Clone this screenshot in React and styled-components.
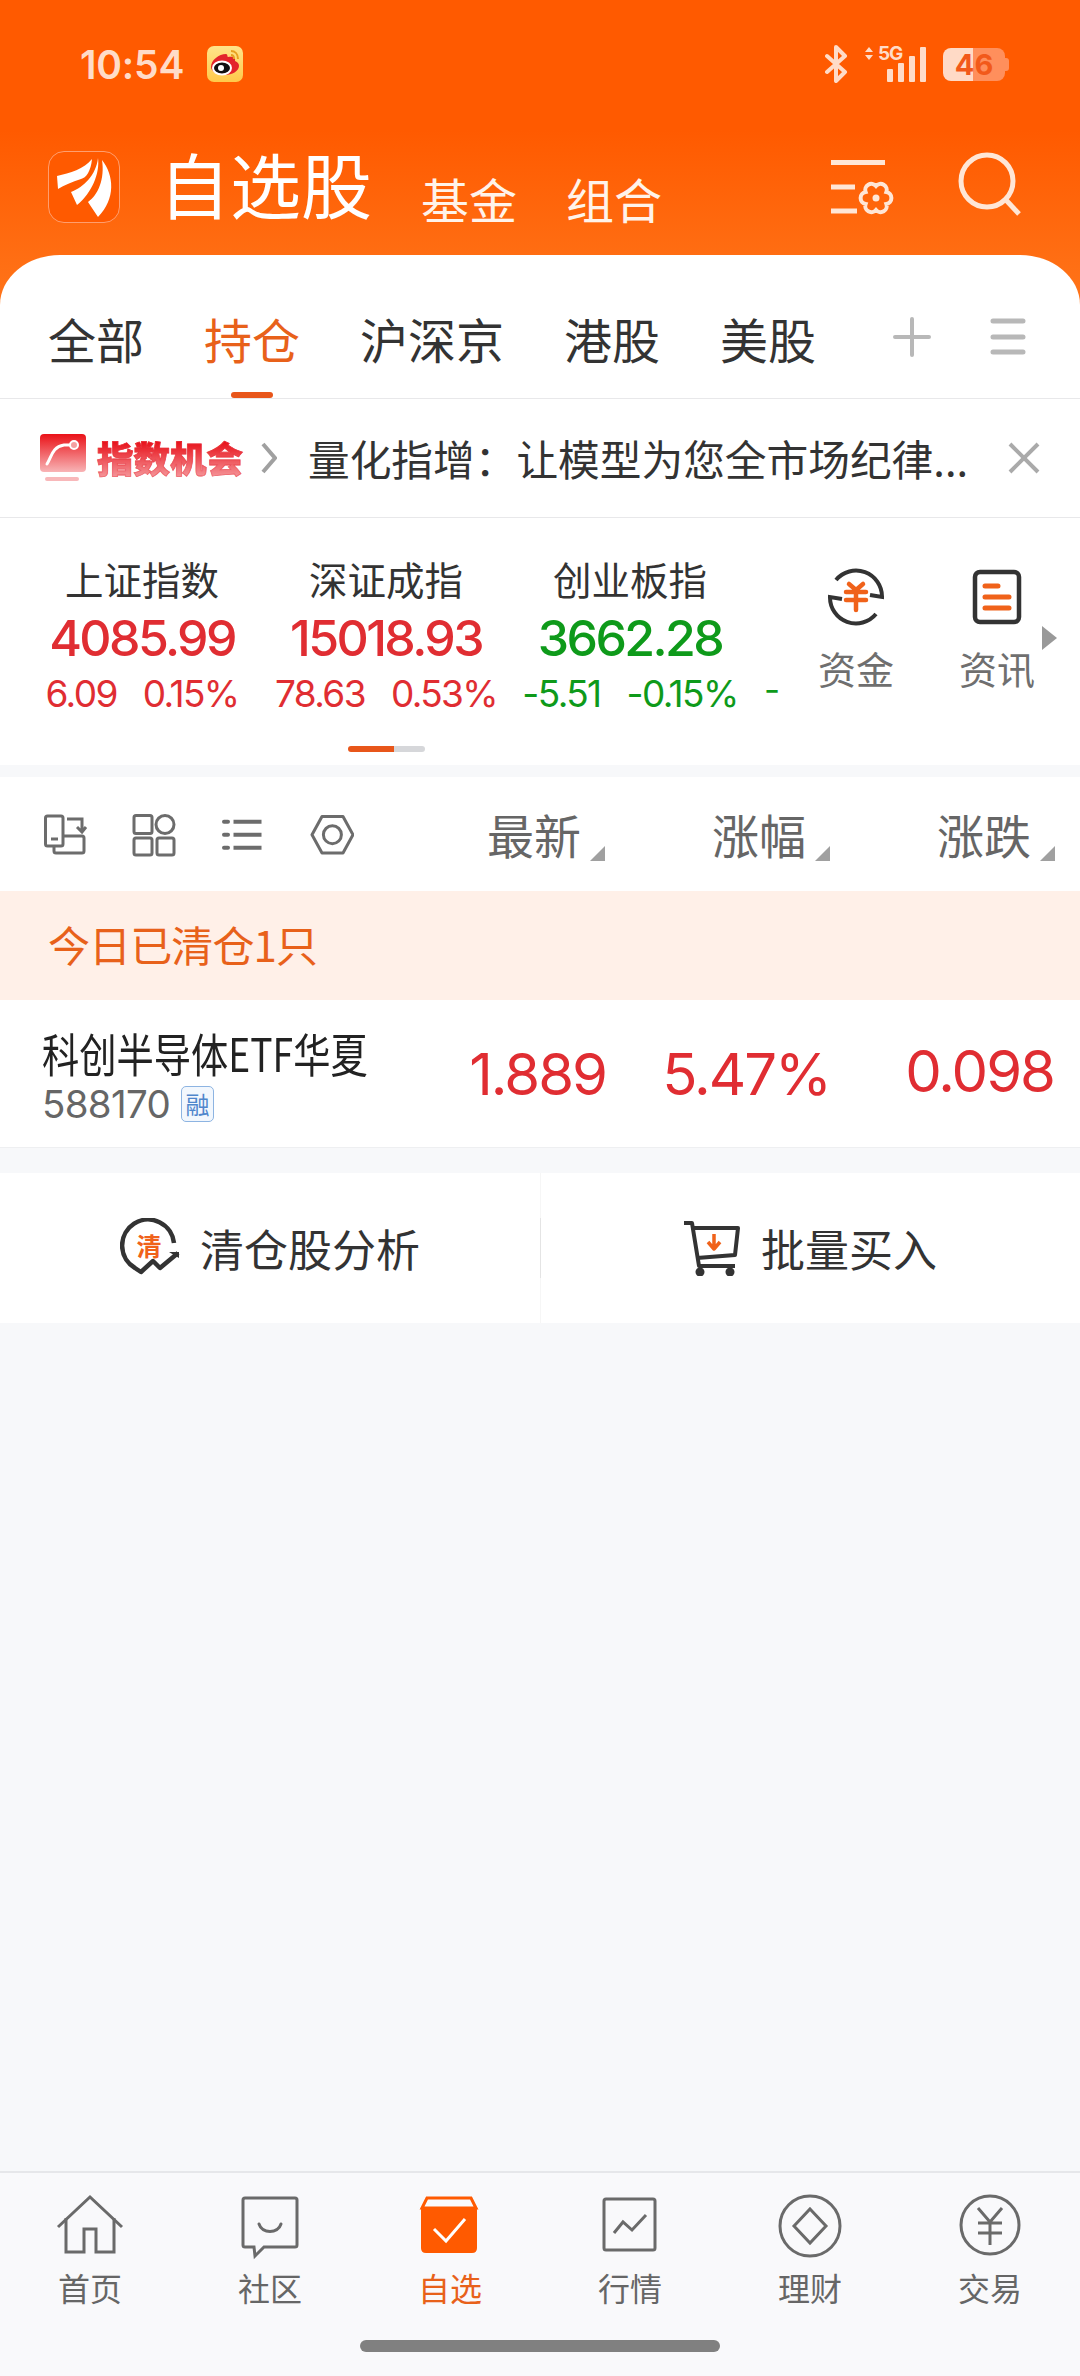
import React from "react";
import styled, { createGlobalStyle } from "styled-components";

const Global = createGlobalStyle`
  html, body { margin: 0; padding: 0; background: #f7f8fa; }
  * { box-sizing: border-box; }
`;
const CJK = `"Noto Sans CJK SC", "Noto Sans", sans-serif`;
const NUM = `Inter, "Noto Sans CJK SC", sans-serif`;
const UP = "#e02d32";
const DOWN = "#0e9a1a";
const ORANGE = "#e8611a";

const Page = styled.div`
  width: 1080px; height: 2376px; display: flex; flex-direction: column;
  background: #f7f8fa; overflow: hidden; font-family: ${CJK}; color: #333;
`;
const Top = styled.header`
  background: linear-gradient(#ff5a00 0, #ff5a00 130px, #ff7419 300px);
`;
const StatusBar = styled.div`
  height: 126px; display: flex; align-items: center; padding: 2px 71px 0 80px;
  color: #ffdcc8;
`;
const Time = styled.span`
  font: 600 39px/1 ${NUM}; letter-spacing: -0.2px; width: 127px;
`;
const StatusRight = styled.div`
  margin-left: auto; margin-right: 4px; display: flex; align-items: center; height: 40px;
`;
const Cell = styled.div`
  position: relative; width: 62px; height: 36px; margin: 0 16px 0 17px;
`;
const FiveG = styled.span`
  position: absolute; left: 13px; top: -2px; font: 700 19px/1 ${NUM}; letter-spacing: -1.2px; color: #ffdcc8;
`;
const Battery = styled.div`
  position: relative; width: 62px; height: 33px; border-radius: 8px; display: flex;
  align-items: center; justify-content: center; font: 700 29px/1 ${NUM}; color: #f2591a;
  background: linear-gradient(90deg, #ffdac6 0, #ffdac6 30px, #ff8f5c 30px);
  &::after {
    content: ""; position: absolute; right: -4px; top: 10px; width: 4px; height: 13px;
    background: #ff8f5c; border-radius: 0 3px 3px 0;
  }
`;
const TitleBar = styled.div`
  height: 129px; display: flex; padding: 25px 57px 0 48px; color: #fff3ea;
`;
const Logo = styled.div`
  width: 72px; height: 72px; border-radius: 16px; border: 1.5px solid #ff9e6e;
  background: #ff5a00; margin-right: 39px;
  svg { display: block; margin: -1.5px; }
`;
const Title = styled.h1`
  margin: -14px 49px 0 0; font: 400 71px/90px ${CJK}; color: #fff;
`;
const SubTitle = styled.span`
  font: 400 48px/60px ${CJK}; margin: 17px 49px 0 0;
`;
const TitleIcons = styled.div`
  margin-left: auto; display: flex; align-items: flex-start; gap: 60px; margin-top: 1px;
`;
const SettingsIcon = styled.svg`
  margin-top: 8px;
`;
const Sheet = styled.div`
  background: #fff; border-radius: 60px 60px 0 0 / 50px 50px 0 0;
`;
const Tabs = styled.nav`
  height: 144px; display: flex; align-items: flex-start; padding: 0 54px 0 48px;
  border-bottom: 1px solid #e8e8ea;
`;
const Tab = styled.div`
  position: relative; font: 400 48px/60px ${CJK}; margin: 53px 60px 0 0; white-space: nowrap;
  color: ${(p) => (p.$active ? ORANGE : "#333")};
  ${(p) => p.$active && `&::after{content:"";position:absolute;left:27px;bottom:-30px;width:42px;height:6px;border-radius:3px;background:#e8561a;}`}
`;
const TabTools = styled.div`
  margin-left: auto; display: flex; gap: 59px; margin-top: 62px;
`;
const Notice = styled.div`
  height: 119px; background: #fff; border-bottom: 1px solid #e8e8ea; display: flex;
  align-items: center; padding: 0 40px;
`;
const NoticeBrand = styled.span`
  font: 900 36.5px/44px ${CJK}; margin: 0 18px 0 11px; letter-spacing: 0;
  background: linear-gradient(#e8141c 15%, #f6a0a4 100%); -webkit-background-clip: text;
  background-clip: text; color: transparent; white-space: nowrap;
  -webkit-text-stroke: 0.8px rgba(232, 50, 60, 0.5);
`;
const NoticeText = styled.span`
  font: 400 41.7px/56px ${CJK}; margin-left: 31px; white-space: nowrap; color: #333; width: 665px;
`;
const Indices = styled.section`
  position: relative; height: 247px; background: #fff; display: flex; padding-left: 20px;
  flex-shrink: 0;
`;
const IndexCard = styled.div`
  width: 244px; display: flex; flex-direction: column; align-items: center; padding-top: 35px;
`;
const IndexName = styled.div`
  font: 400 38.5px/50px ${CJK}; color: #333;
`;
const IndexPrice = styled.div`
  font: 500 50px/56px ${NUM}; letter-spacing: -2.6px; color: ${(p) => p.$c}; margin-top: 7px;
`;
const IndexSub = styled.div`
  font: 400 37px/44px ${NUM}; letter-spacing: -1.6px; color: ${(p) => p.$c}; display: flex; gap: 26px; margin-top: 6px;
`;
const Dash = styled.span`
  font: 400 35px/44px ${NUM}; color: ${DOWN}; position: absolute; left: 764px; top: 149px;
`;
const Shortcuts = styled.div`
  position: absolute; left: 0; top: 0; width: 100%; height: 100%; pointer-events: none;
`;
const Shortcut = styled.div`
  position: absolute; left: ${(p) => p.$x}px; top: 50px; width: 100px; display: flex; flex-direction: column;
  align-items: center; font: 400 38px/50px ${CJK}; color: #6f6f6f;
  svg { display: block; margin-bottom: 17px; }
`;
const MoreArrow = styled.div`
  position: absolute; left: 1042px; top: 108px; width: 0; height: 0;
  border-left: 15px solid #999; border-top: 12px solid transparent; border-bottom: 12px solid transparent;
`;
const Pager = styled.div`
  position: absolute; left: 348px; top: 228px; width: 77px; height: 6px; border-radius: 3px;
  background: linear-gradient(90deg, #e8561a 0, #e8561a 46px, #d6d7da 46px);
`;
const Toolbar = styled.div`
  margin-top: 12px; height: 114px; background: #fff; display: flex; align-items: center;
  padding: 0 25px 0 44px; flex-shrink: 0;
`;
const ToolIcons = styled.div`
  display: flex; gap: 42px; margin-right: auto; margin-top: 4px;
`;
const SortCol = styled.div`
  width: 225px; display: flex; justify-content: flex-end; align-items: flex-end; font: 400 47px/60px ${CJK}; color: #666;
  svg { margin: 0 0 0 9px; position: relative; top: -3px; }
`;
const SoldBanner = styled.div`
  height: 109px; background: #fff0e8; display: flex; align-items: center; padding: 0 0 3px 48px;
  font: 400 42px/56px ${CJK}; color: ${ORANGE}; flex-shrink: 0; letter-spacing: -0.9px;
`;
const StockRow = styled.div`
  height: 148px; background: #fff; border-bottom: 1px solid #eeeff1; display: flex; align-items: center;
  padding: 0 28px 0 42px; flex-shrink: 0;
`;
const StockInfo = styled.div`
  margin-right: auto; width: 340px; flex: none; display: flex; flex-direction: column; margin-top: 8px;
`;
const StockName = styled.div`
  font: 400 46px/52px ${CJK}; color: #222; white-space: nowrap;
  transform: scaleX(0.81); transform-origin: left center;
`;
const CodeLine = styled.div`
  display: flex; align-items: center; gap: 11px; font: 400 38.5px/52px ${NUM}; letter-spacing: -0.7px; color: #666;
`;
const Badge = styled.span`
  width: 33px; height: 36px; border: 1.5px solid #8db4e2; border-radius: 5px; background: #f2f7fd; color: #4f86cc;
  font: 400 24px/33px ${CJK}; text-align: center; letter-spacing: 0;
`;
const Price = styled.div`
  width: 224px; flex: none; text-align: right; font: 400 58px/1 ${NUM}; letter-spacing: -2px; color: ${UP};
  margin-top: ${(p) => p.$up || 0}px;
`;
const Actions = styled.div`
  margin-top: 25px; height: 150px; background: #fff; display: flex; flex-shrink: 0;
`;
const Action = styled.div`
  flex: 1; display: flex; align-items: center; justify-content: center; gap: 18px;
  font: 400 44px/56px ${CJK}; color: #333; position: relative;
  & + &::before {
    content: ""; position: absolute; left: 0; top: 0; bottom: 0; width: 1px;
    background: linear-gradient(#f6f6f6 0, #f6f6f6 30%, #e4e4e4 30%, #e4e4e4 70%, #f6f6f6 70%);
  }
`;
const Spacer = styled.div`
  flex: 1;
`;
const TabBar = styled.footer`
  height: 205px; background: #f9f9fb; border-top: 2px solid #e6e7ea; display: flex; flex-direction: column; flex-shrink: 0;
`;
const BarItems = styled.div`
  display: grid; grid-template-columns: repeat(6, 180px); padding-top: 21px;
`;
const BarItem = styled.div`
  display: flex; flex-direction: column; align-items: center; font: 400 32px/42px ${CJK};
  color: ${(p) => (p.$active ? ORANGE : "#666")};
  svg { display: block; margin-bottom: 8px; }
`;
const HomeBar = styled.div`
  width: 360px; height: 12px; border-radius: 6px; background: #808080; margin: 32px auto 0;
`;

const gray = "#6a6a6a";
const barIcons = [
  ["首页", <g fill="none" stroke={gray} strokeWidth="3"><path d="M3 33 L35 3 L67 33" /><path d="M11 24V58H29V35H41V58H59V24" /></g>],
  ["社区", <g fill="none" stroke={gray} strokeWidth="3"><path d="M10 4H60a2 2 0 0 1 2 2V51a2 2 0 0 1-2 2H29l-9 9-1-9H10a2 2 0 0 1-2-2V6a2 2 0 0 1 2-2Z" /><path d="M24 30c3 10 19 10 22 0" strokeLinecap="round" /></g>],
  ["自选", <g><path d="M12 4H56L61 14H7Z" fill="none" stroke="#ff5a00" strokeWidth="3" /><path d="M6 16Q6 13 9 13H59Q62 13 62 16V54Q62 59 57 59H11Q6 59 6 54Z" fill="#ff5a00" /><path d="M19 35 L31 47 L50 25" fill="none" stroke="#fff" strokeWidth="3" /></g>],
  ["行情", <g fill="none" stroke={gray} strokeWidth="3"><rect x="9" y="5" width="51" height="51" rx="2" /><path d="M19 39 28 28 37 36 51 21" /></g>],
  ["理财", <g fill="none" stroke={gray} strokeWidth="3"><circle cx="35" cy="32" r="30" /><path d="M35 15 51 32 35 49 19 32Z" /></g>],
  ["交易", <g fill="none" stroke={gray} strokeWidth="3"><circle cx="35" cy="31" r="29" /><path d="M23 14 35 28 47 14M35 28V51M23 29H47M23 39H47" /></g>],
];

export default function App() {
  return (
    <Page>
      <Global />
      <Top>
        <StatusBar>
          <Time>10:54</Time>
          <svg width="36" height="36" viewBox="0 0 36 36">
            <defs><linearGradient id="wb" x1="0" y1="0" x2="0" y2="1"><stop offset="0" stopColor="#ffe48a" /><stop offset="1" stopColor="#ffc94a" /></linearGradient></defs>
            <rect width="36" height="36" rx="7" fill="url(#wb)" />
            <path d="M4 21C4 14 12 8 19 8c2 0 1 3 2 3 4-1 8 0 7 4 3 1 4 3 4 5 0 5-7 9-14 9S4 26 4 21Z" fill="#e3242b" />
            <ellipse cx="15" cy="22" rx="9" ry="6" fill="#111" />
            <ellipse cx="15" cy="22" rx="9" ry="6.5" fill="none" stroke="#fff" strokeWidth="2" />
            <circle cx="14" cy="22" r="3" fill="#fff" />
            <path d="M24 5c4 0 7 3 7 8M24 9c2 0 3 2 3 4" fill="none" stroke="#e8a020" strokeWidth="2" />
          </svg>
          <StatusRight>
            <svg width="23" height="38" viewBox="0 0 23 38">
              <path d="M2 11 20 27 11 36V2l9 9L2 27" fill="none" stroke="#ffdcc8" strokeWidth="4" strokeLinejoin="round" strokeLinecap="round" />
            </svg>
            <Cell>
              <svg width="62" height="36" viewBox="0 0 62 36" style={{ position: "absolute", left: 0, top: 0 }}>
                <path d="M0 6 4 1 8 6ZM0 9 4 14 8 9Z" fill="#ffdcc8" />
                <g fill="#ffdcc8">
                  <rect x="22" y="23" width="6" height="13" rx="1" />
                  <rect x="33" y="17" width="6" height="19" rx="1" />
                  <rect x="44" y="10" width="6" height="26" rx="1" />
                  <rect x="55" y="1" width="6" height="35" rx="1" />
                </g>
              </svg>
              <FiveG>5G</FiveG>
            </Cell>
            <Battery>46</Battery>
          </StatusRight>
        </StatusBar>
        <TitleBar>
          <Logo>
            <svg width="72" height="72" viewBox="0 0 72 72" fill="#fff">
              <path d="M9 25C22 22 36 18 44 8 43 20 38 27 33 28 24 31 16 34 10 38Z" />
              <path d="M50 7C52 22 44 42 29 54L23 41C36 36 48 24 50 7Z" />
              <path d="M54 9C66 24 68 48 50 66L40 51C50 44 57 28 54 9Z" />
            </svg>
          </Logo>
          <Title>自选股</Title>
          <SubTitle>基金</SubTitle>
          <SubTitle>组合</SubTitle>
          <TitleIcons>
            <SettingsIcon width="66" height="60" viewBox="0 0 66 60" fill="none" stroke="#ffe6d6" strokeWidth="5">
              <path d="M0 2.5H54M0 27H24M0 51H26" />
              <path d="M55.4 44A6.1 6.1 0 0 1 45 50 6.1 6.1 0 0 1 34.6 44 6.1 6.1 0 0 1 34.6 32 6.1 6.1 0 0 1 45 26 6.1 6.1 0 0 1 55.4 32 6.1 6.1 0 0 1 55.4 44Z" strokeWidth="4" />
              <circle cx="45" cy="38" r="3.5" fill="#ffe6d6" stroke="none" />
            </SettingsIcon>
            <svg width="66" height="66" viewBox="0 0 66 66" fill="none" stroke="#ffe6d6" strokeWidth="5">
              <circle cx="30" cy="29" r="26" />
              <path d="M49 48 62 62" />
            </svg>
          </TitleIcons>
        </TitleBar>
        <Sheet>
          <Tabs>
            <Tab>全部</Tab>
            <Tab $active>持仓</Tab>
            <Tab>沪深京</Tab>
            <Tab>港股</Tab>
            <Tab>美股</Tab>
            <TabTools>
              <svg width="38" height="40" viewBox="0 0 38 40" stroke="#b8b8b8" strokeWidth="4" strokeLinecap="round"><path d="M19 2V38M2 20H36" /></svg>
              <svg width="36" height="40" viewBox="0 0 36 40" stroke="#b8b8b8" strokeWidth="5" strokeLinecap="round"><path d="M3 4H33M3 20H33M3 35H33" /></svg>
            </TabTools>
          </Tabs>
        </Sheet>
      </Top>
      <Notice>
        <svg width="46" height="48" viewBox="0 0 46 48">
          <defs><linearGradient id="zs" x1="0" y1="0" x2="0" y2="1"><stop offset="0" stopColor="#ea1218" /><stop offset="1" stopColor="#f8b4b6" /></linearGradient></defs>
          <rect width="46" height="38" rx="4" fill="url(#zs)" />
          <path d="M7 30C12 22 12 13 24 11H31" fill="none" stroke="#fff" strokeWidth="3" strokeLinecap="round" />
          <circle cx="34" cy="11" r="4" fill="#f5a0a0" stroke="#fff" strokeWidth="2" />
          <rect x="5" y="43" width="34" height="4" rx="2" fill="#f8b8ba" />
        </svg>
        <NoticeBrand>指数机会</NoticeBrand>
        <svg width="16" height="32" viewBox="0 0 16 32" fill="none" stroke="#a0a0a0" strokeWidth="4"><path d="M2 2 14 16 2 30" /></svg>
        <NoticeText>量化指增：让模型为您全市场纪律...</NoticeText>
        <svg width="32" height="32" viewBox="0 0 32 32" stroke="#aaa" strokeWidth="4" style={{ marginLeft: 35 }}><path d="M2 2 30 30M30 2 2 30" /></svg>
      </Notice>
      <Indices>
        <IndexCard>
          <IndexName>上证指数</IndexName>
          <IndexPrice $c={UP}>4085.99</IndexPrice>
          <IndexSub $c={UP}><span>6.09</span><span>0.15%</span></IndexSub>
        </IndexCard>
        <IndexCard>
          <IndexName>深证成指</IndexName>
          <IndexPrice $c={UP}>15018.93</IndexPrice>
          <IndexSub $c={UP}><span>78.63</span><span>0.53%</span></IndexSub>
        </IndexCard>
        <IndexCard>
          <IndexName>创业板指</IndexName>
          <IndexPrice $c={DOWN}>3662.28</IndexPrice>
          <IndexSub $c={DOWN}><span>-5.51</span><span>-0.15%</span></IndexSub>
        </IndexCard>
        <Dash>-</Dash>
        <Shortcuts>
          <Shortcut $x={806}>
            <svg width="60" height="58" viewBox="0 0 60 58" fill="none">
              <path d="M10 12A26 26 0 0 1 56 29L44 27M50 46A26 26 0 0 1 4 29L16 31" stroke="#333" strokeWidth="4" />
              <path d="M23 16 30 22 37 16M20 24H40M20 32H40M30 22V42" stroke="#f0621a" strokeWidth="4.5" strokeLinecap="round" />
            </svg>
            资金
          </Shortcut>
          <Shortcut $x={947}>
            <svg width="50" height="58" viewBox="0 0 50 58" fill="none">
              <rect x="3" y="4" width="44" height="50" rx="5" stroke="#333" strokeWidth="4.5" />
              <path d="M13 18H26M13 29H37M13 40H37" stroke="#f0621a" strokeWidth="5" strokeLinecap="round" />
            </svg>
            资讯
          </Shortcut>
          <MoreArrow />
        </Shortcuts>
        <Pager />
      </Indices>
      <Toolbar>
        <ToolIcons>
          <svg width="46" height="44" viewBox="0 0 46 44" fill="none" stroke="#6c6c6c" strokeWidth="3">
            <rect x="1.5" y="2" width="17.5" height="30" rx="2" />
            <path d="M7 25H14" />
            <path d="M19 22H38a2 2 0 0 1 2 2V37a2 2 0 0 1-2 2H12a2 2 0 0 1-2-2V32" />
            <path d="M23 5H38V17M33 13 38 18 42 13" />
          </svg>
          <svg width="46" height="44" viewBox="2 0 46 44" fill="none" stroke="#6c6c6c" strokeWidth="3">
            <rect x="4" y="1.5" width="18" height="18" rx="2" />
            <circle cx="35" cy="10.5" r="9" />
            <rect x="4" y="24" width="18" height="17" rx="2" />
            <rect x="27" y="24" width="17" height="17" rx="2" />
          </svg>
          <svg width="46" height="44" viewBox="0 0 46 44" fill="none" stroke="#6c6c6c" strokeWidth="4">
            <path d="M13.5 7.7H41.5M13.5 20.7H41.5M13.5 33.7H41.5" />
            <path d="M4 7.7H8M4 20.7H8M4 33.7H8" strokeLinecap="round" />
          </svg>
          <svg width="46" height="44" viewBox="-2 0 46 44" fill="none" stroke="#6c6c6c" strokeWidth="3">
            <path d="M2 20.7 12 2.5H33L43 20.7 33 39H12Z" strokeLinejoin="round" />
            <circle cx="22.4" cy="20.7" r="9" />
          </svg>
        </ToolIcons>
        {["最新", "涨幅", "涨跌"].map((t) => (
          <SortCol key={t}>
            {t}
            <svg width="15" height="15" viewBox="0 0 15 15"><path d="M15 0V15H0Z" fill="#a0a0a0" /></svg>
          </SortCol>
        ))}
      </Toolbar>
      <SoldBanner>今日已清仓1只</SoldBanner>
      <StockRow>
        <StockInfo>
          <StockName>科创半导体ETF华夏</StockName>
          <CodeLine>588170<Badge>融</Badge></CodeLine>
        </StockInfo>
        <Price>1.889</Price>
        <Price>5.47%</Price>
        <Price $up={-6}>0.098</Price>
      </StockRow>
      <Actions>
        <Action>
          <svg width="62" height="60" viewBox="0 0 62 60" fill="none">
            <path d="M54 25A26 26 0 1 0 15 50L21 54 33 43 40 50 58 35" stroke="#333" strokeWidth="4.5" strokeLinejoin="round" />
            <path d="M49 34H59V40Z" fill="#333" />
            <text x="29" y="38" textAnchor="middle" fontSize="25" fontWeight="700" fill="#f0621a" fontFamily={CJK}>清</text>
          </svg>
          清仓股分析
        </Action>
        <Action>
          <svg width="60" height="56" viewBox="0 0 60 56" fill="none" stroke="#333" strokeWidth="4" strokeLinejoin="round">
            <path d="M1 3H9L16 46H52" />
            <path d="M10 8H55L52 35 14 38" />
            <circle cx="17" cy="52" r="2.5" fill="#333" />
            <circle cx="47" cy="52" r="2.5" fill="#333" />
            <path d="M31 14V28M25 22 31 29 37 22" stroke="#f0621a" strokeWidth="3.5" />
          </svg>
          批量买入
        </Action>
      </Actions>
      <Spacer />
      <TabBar>
        <BarItems>
          {barIcons.map(([label, icon], i) => (
            <BarItem key={label} $active={i === 2}>
              <svg width="70" height="64" viewBox="0 0 70 64" overflow="visible">{icon}</svg>
              {label}
            </BarItem>
          ))}
        </BarItems>
        <HomeBar />
      </TabBar>
    </Page>
  );
}
